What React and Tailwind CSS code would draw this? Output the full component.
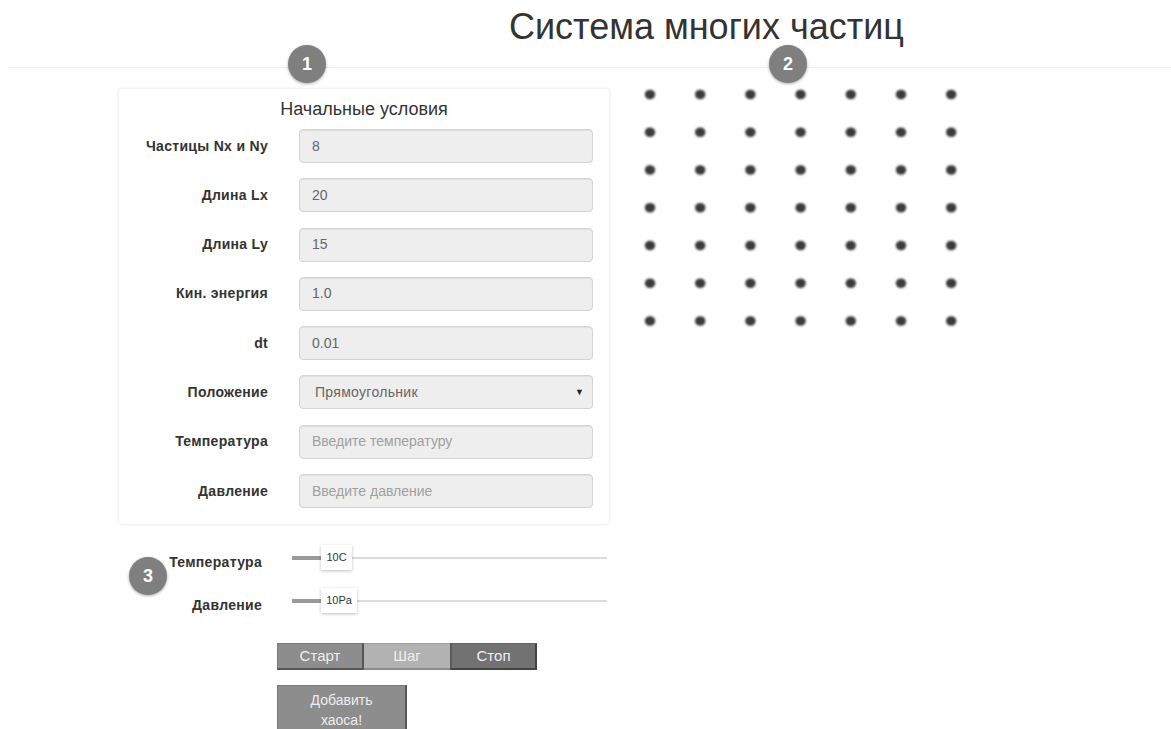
import React from "react";

const fields = [
  { label: "Частицы Nx и Ny", value: "8" },
  { label: "Длина Lx", value: "20" },
  { label: "Длина Ly", value: "15" },
  { label: "Кин. энергия", value: "1.0" },
  { label: "dt", value: "0.01" },
  { label: "Положение", value: "Прямоугольник", select: true },
  { label: "Температура", placeholder: "Введите температуру" },
  { label: "Давление", placeholder: "Введите давление" },
];

function Badge({ n, className }) {
  return (
    <div
      className={
        "absolute w-[38px] h-[38px] rounded-full bg-[#7f7f7f] text-white font-bold text-[18px] flex items-center justify-center shadow-[0_1px_3px_rgba(0,0,0,0.35)] " +
        className
      }
    >
      {n}
    </div>
  );
}

function Field({ f }) {
  return (
    <div className="flex items-center h-[34px]">
      <div className="w-[149px] text-right text-[14px] tracking-[0.3px] font-bold text-[#333]">{f.label}</div>
      <div className="ml-[31px] w-[294px] h-[34px] rounded-[4px] bg-[#eeeeee] border border-[#d4d4d4] shadow-[inset_0_1px_1px_rgba(0,0,0,0.06)] flex items-center px-[12px] text-[14px]">
        {f.value !== undefined ? (
          <span className={"text-[#666] flex-1 " + (f.select ? "pl-[3px] tracking-[0.3px]" : "pl-[-1px]")}>{f.value}</span>
        ) : (
          <span className="text-[#a0a0a0] flex-1">{f.placeholder}</span>
        )}
        {f.select && <span className="text-[9px] text-[#222] mr-[-4px]">▼</span>}
      </div>
    </div>
  );
}

function SliderRow({ label, value, boxW }) {
  return (
    <div className="flex items-start h-[25px]">
      <div className="w-[144px] text-right text-[14px] tracking-[0.3px] font-bold text-[#333] pt-[7px]">{label}</div>
      <div className="ml-[30px] w-[315px] h-[25px] relative flex items-center">
        <div className="absolute left-0 right-0 top-[12px] h-[2px] bg-[#dcdcdc]" />
        <div className="absolute left-0 w-[29px] top-[11px] h-[4px] bg-[#9a9a9a]" />
        <div
          className="absolute left-[29px] top-0 h-[25px] bg-white shadow-[0_1px_3px_rgba(0,0,0,0.25)] text-[11px] text-[#333] flex items-center justify-center"
          style={{ width: boxW }}
        >
          {value}
        </div>
      </div>
    </div>
  );
}

function Particles() {
  const cols = [0, 1, 2, 3, 4, 5, 6];
  const rows = [0, 1, 2, 3, 4, 5, 6];
  return (
    <svg width="360" height="280" className="block">
      <defs>
        <filter id="soft" x="-50%" y="-50%" width="200%" height="200%">
          <feGaussianBlur stdDeviation="0.8" />
        </filter>
      </defs>
      <g filter="url(#soft)" fill="#3b3b3b">
        {rows.map((r) =>
          cols.map((c) => (
            <ellipse key={r + "-" + c} cx={30 + c * 50.2} cy={26.5 + r * 37.75} rx="5.2" ry="4.8" />
          ))
        )}
      </g>
    </svg>
  );
}

export default function App() {
  return (
    <div className="relative w-[1171px] h-[729px] overflow-hidden bg-white font-['Liberation_Sans',Arial,sans-serif]">
      <header className="h-[67px] pl-[509px] pt-[5px]">
        <h1 className="text-[36px] leading-[44px] text-[#333]">Система многих частиц</h1>
      </header>
      <div className="ml-[9px] border-t border-[#ececec]" />

      <main className="flex">
        <section className="ml-[118px] w-[492px] pt-[20px]">
          <div className="rounded-[4px] border border-[#f3f3f3] shadow-[0_0_3px_rgba(0,0,0,0.06)] pt-[9px] pb-[16px]">
            <h2 className="text-center text-[18px] leading-[22px] text-[#333] mb-[9px]">Начальные условия</h2>
            <div className="flex flex-col gap-[15.3px]">
              {fields.map((f) => (
                <Field key={f.label} f={f} />
              ))}
            </div>
          </div>

          <div className="mt-[20px] flex flex-col gap-[18px]">
            <SliderRow label="Температура" value="10C" boxW={31} />
            <SliderRow label="Давление" value="10Pa" boxW={36} />
          </div>

          <div className="ml-[159px] mt-[30px] flex h-[27px] text-[15px] text-[#eeeeee]">
            <button className="w-[87px] bg-[#8d8d8d] border-t border-l border-[#7a7a7a] border-r-2 border-b-2 border-r-[#555] border-b-[#555]">Старт</button>
            <button className="w-[86px] bg-[#b2b2b2] border-t border-[#a0a0a0] border-b-2 border-b-[#8a8a8a]">Шаг</button>
            <button className="w-[87px] bg-[#727272] border-l-2 border-l-[#5a5a5a] border-t border-t-[#666] border-r-2 border-b-2 border-r-[#444] border-b-[#444]">Стоп</button>
          </div>

          <button className="ml-[159px] mt-[15px] w-[130px] h-[60px] bg-[#8d8d8d] border-t border-l border-[#7a7a7a] border-r-2 border-r-[#555] text-[14px] leading-[20px] text-[#eeeeee] flex flex-col items-center justify-start">
            <span className="pt-[4px]">Добавить</span>
            <span>хаоса!</span>
          </button>
        </section>

        <section className="ml-[10px]">
          <Particles />
        </section>
      </main>

      <Badge n="1" className="left-[288px] top-[45px]" />
      <Badge n="2" className="left-[769px] top-[45px]" />
      <Badge n="3" className="left-[129px] top-[557px]" />
    </div>
  );
}
